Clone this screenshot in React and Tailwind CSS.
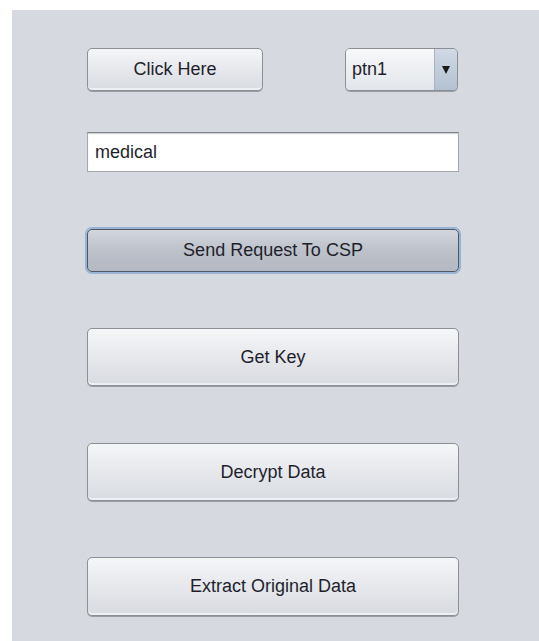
import React, { useState } from 'react';

const font = { fontFamily: '"Liberation Sans", Arial, sans-serif' };

// Nimbus-style push button
const PushButton = ({ label, className = '', pressed = false }) => (
    <button
        style={font}
        className={
            'flex items-center justify-center rounded-[5px] border text-[18px] text-[#1f1f2c] ' +
            (pressed
                ? 'border-[#4f5866] bg-gradient-to-b from-[#d3d6dd] via-[#bcc1ca] to-[#b3b8c2] ring-2 ring-[#7fa2cd]/70 '
                : 'border-[#8c8f96] bg-gradient-to-b from-[#f5f6f8] via-[#e6e8ec] to-[#d8dbe1] shadow-[inset_0_-2px_0_#eef0f3,0_1px_0_#9a9da3] ') +
            className
        }
    >
        {label}
    </button>
);

const App = () => {
    const [patient] = useState('ptn1');

    return (
        <div className="w-[539px] h-[641px] bg-white pl-[12px] pt-[10px]">
            <div className="h-full bg-[#d6d9df] pl-[75px] pt-[38px]">
                <div className="w-[372px] flex flex-col">
                    <div className="flex items-center justify-between">
                        <PushButton label="Click Here" className="w-[176px] h-[43px]" />
                        <div
                            style={font}
                            className="flex h-[43px] w-[113px] mr-[1px] rounded-[5px] border border-[#8c8f96] overflow-hidden shadow-[0_1px_0_#9a9da3]"
                        >
                            <div className="flex-1 flex items-center pl-[6px] text-[18px] text-[#1f1f2c] bg-gradient-to-b from-[#f7f8fa] to-[#e2e5ea]">
                                {patient}
                            </div>
                            <div className="w-[23px] flex items-center justify-center border-l border-[#a9b4c2] bg-gradient-to-b from-[#d0d9e4] to-[#b4c1d1]">
                                <svg width="8" height="8" viewBox="0 0 8 8">
                                    <path d="M0 0h8L4 8z" fill="#1a1a1a" />
                                </svg>
                            </div>
                        </div>
                    </div>

                    <div
                        style={font}
                        className="mt-[41px] h-[40px] flex items-center pl-[7px] bg-white border border-[#a3a7ae] border-t-[#7f838a] shadow-[inset_0_1px_1px_#c9ccd1] text-[18px] text-[#1f1f2c]"
                    >
                        medical
                    </div>

                    <PushButton label="Send Request To CSP" pressed className="mt-[57px] h-[43px] w-full" />
                    <PushButton label="Get Key" className="mt-[56px] h-[58px] w-full" />
                    <PushButton label="Decrypt Data" className="mt-[57px] h-[58px] w-full" />
                    <PushButton label="Extract Original Data" className="mt-[56px] h-[59px] w-full" />
                </div>
            </div>
        </div>
    );
};

export default App;
